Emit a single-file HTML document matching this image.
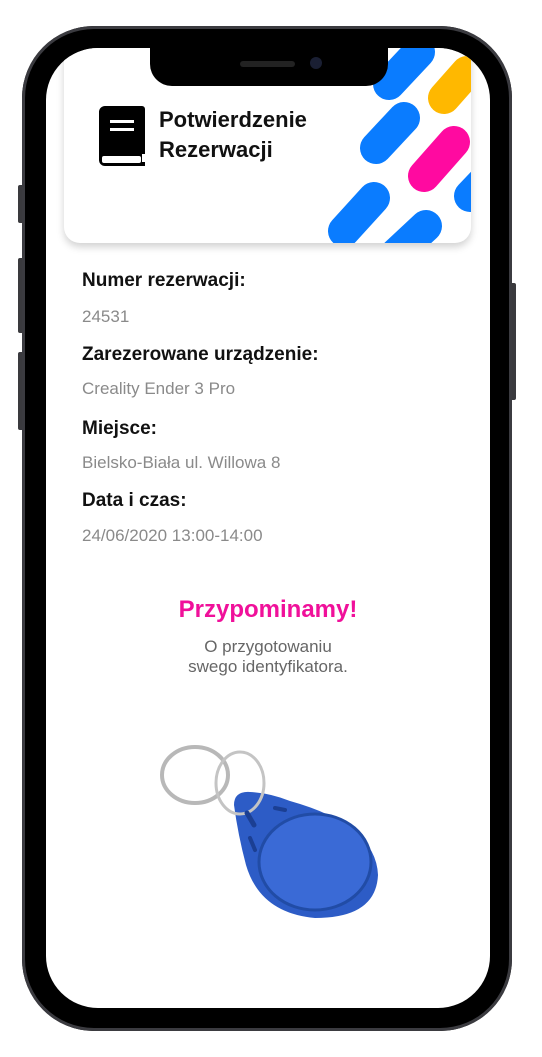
<!DOCTYPE html>
<html><head><meta charset="utf-8"><style>
html,body{margin:0;padding:0;background:#fff;}
body{width:542px;height:1057px;position:relative;overflow:hidden;font-family:"Liberation Sans",sans-serif;}
.btn{position:absolute;background:#3a3a3e;border-radius:2px;}
.body{position:absolute;left:22px;top:26px;width:490px;height:1005px;border-radius:72px;background:#000;box-shadow:inset 0 0 0 3px #3b3b40;}
.screen{position:absolute;left:46px;top:48px;width:444px;height:960px;border-radius:52px;background:#fff;overflow:hidden;}
.card{position:absolute;left:18px;top:0;width:407px;height:195px;border-radius:0 0 16px 16px;background:#fff;box-shadow:0 4px 8px rgba(0,0,0,.18);overflow:hidden;}
.notch{position:absolute;left:150px;top:46px;width:238px;height:40px;background:#000;border-radius:0 0 22px 22px;}
.lab{position:absolute;left:82px;font-weight:bold;font-size:19px;color:#111;}
.val{position:absolute;left:82px;font-size:17px;color:#8a8a8a;}
</style></head><body>
<div class="btn" style="left:18px;top:185px;width:6px;height:38px"></div>
<div class="btn" style="left:18px;top:258px;width:6px;height:75px"></div>
<div class="btn" style="left:18px;top:352px;width:6px;height:78px"></div>
<div class="btn" style="left:510px;top:283px;width:6px;height:117px"></div>
<div class="body"></div>
<div class="screen">
 <div class="card">
  <svg style="position:absolute;left:0;top:0" width="407" height="195">
   <g stroke-linecap="round" stroke-width="32" fill="none">
    <line x1="325" y1="36" x2="355" y2="4" stroke="#0a7cff"/>
    <line x1="380" y1="50" x2="403" y2="24" stroke="#ffb800"/>
    <line x1="312" y1="100" x2="340" y2="70" stroke="#0a7cff"/>
    <line x1="360" y1="128" x2="390" y2="94" stroke="#ff0aa0"/>
    <line x1="406" y1="148" x2="425" y2="128" stroke="#0a7cff"/>
    <line x1="280" y1="183" x2="310" y2="150" stroke="#0a7cff"/>
    <line x1="332" y1="206" x2="362" y2="178" stroke="#0a7cff"/>
   </g>
   <path d="M38 58 h40 a3 3 0 0 1 3 3 v45 h-3 v8 h3 v4 h-40 a6 6 0 0 1 -6 -6 v-48 a6 6 0 0 1 6 -6z" fill="#000"/>
   <rect x="38" y="108" width="39" height="7" rx="2" fill="#fff"/>
   <rect x="46" y="72" width="24" height="3" fill="#fff"/>
   <rect x="46" y="80" width="24" height="3" fill="#fff"/>
  </svg>
  <div style="position:absolute;left:95px;top:57px;font-size:22px;font-weight:bold;line-height:30px;color:#111">Potwierdzenie<br>Rezerwacji</div>
 </div>
</div>
<div class="notch"></div>
<div style="position:absolute;left:240px;top:61px;width:55px;height:6px;border-radius:3px;background:#222"></div>
<div style="position:absolute;left:310px;top:57px;width:12px;height:12px;border-radius:6px;background:#1a1f33"></div>
<div class="lab" style="top:270px">Numer rezerwacji:</div>
<div class="val" style="top:307px">24531</div>
<div class="lab" style="top:344px">Zarezerowane urządzenie:</div>
<div class="val" style="top:379px">Creality Ender 3 Pro</div>
<div class="lab" style="top:418px">Miejsce:</div>
<div class="val" style="top:453px">Bielsko-Biała ul. Willowa 8</div>
<div class="lab" style="top:490px">Data i czas:</div>
<div class="val" style="top:526px">24/06/2020 13:00-14:00</div>
<div style="position:absolute;left:0;width:536px;top:596px;text-align:center;font-size:24px;font-weight:bold;color:#f0109a">Przypominamy!</div>
<div style="position:absolute;left:0;width:536px;top:637px;text-align:center;font-size:17px;line-height:20px;color:#666">O przygotowaniu<br>swego identyfikatora.</div>
<svg style="position:absolute;left:150px;top:735px" width="240" height="190">
 <ellipse cx="45" cy="40" rx="33" ry="28" fill="none" stroke="#b8b8b8" stroke-width="4"/>
 <path d="M84 70 Q84 56 100 57 Q120 58 140 66 Q226 90 228 140 Q226 183 165 183 Q110 178 96 130 Q88 100 84 70z" fill="#2d5cc6"/>
 <ellipse cx="90" cy="48" rx="24" ry="31" fill="none" stroke="#c4c4c4" stroke-width="3"/>
 <ellipse cx="165" cy="127" rx="56" ry="48" fill="#3a6ad6" stroke="#214ca6" stroke-width="3"/>
 <line x1="97" y1="78" x2="104" y2="90" stroke="#1b3f93" stroke-width="5" stroke-linecap="round"/>
 <line x1="125" y1="73" x2="135" y2="75" stroke="#1b3f93" stroke-width="4" stroke-linecap="round"/>
 <line x1="100" y1="103" x2="105" y2="115" stroke="#1b3f93" stroke-width="4" stroke-linecap="round"/>
</svg>
</body></html>
